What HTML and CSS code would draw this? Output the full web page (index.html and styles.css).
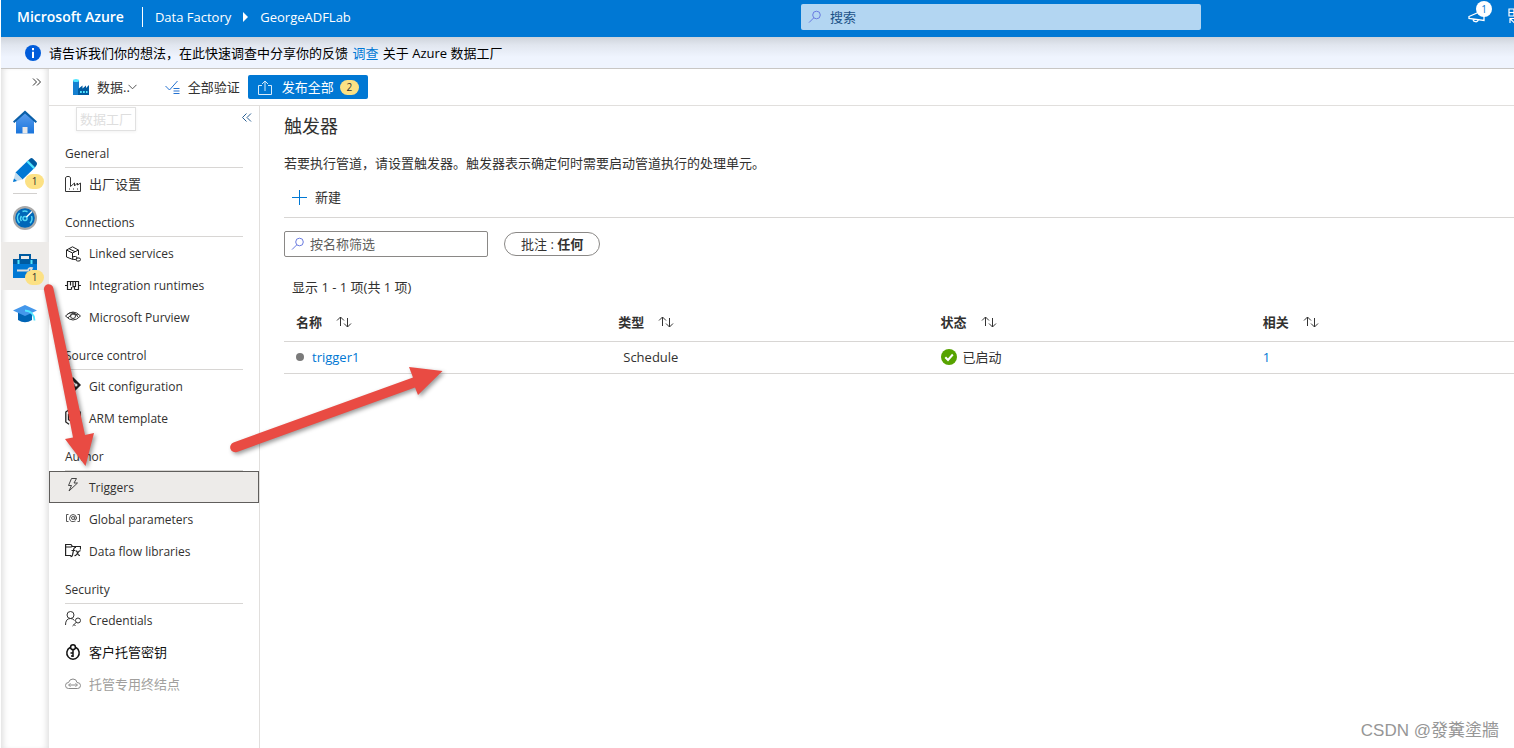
FILE: index.html
```html
<!DOCTYPE html>
<html lang="zh-CN">
<head>
<meta charset="utf-8">
<title>GeorgeADFLab - Azure Data Factory</title>
<link rel="stylesheet" href="styles.css">
</head>
<body>
<header class="topbar">
  <nav class="brand">
    <a class="brand-name" href="#">Microsoft Azure</a>
    <a class="crumb" href="#">Data Factory</a>
    <svg class="crumb-arrow" width="5" height="10" viewBox="0 0 5 10"><path d="M0 0l5 5-5 5z" fill="#fff"/></svg>
    <a class="crumb" href="#">GeorgeADFLab</a>
  </nav>
  <label class="search global-search">
    <svg width="14" height="14" viewBox="0 0 14 14" fill="none" stroke="#6a7be0"><circle cx="8.500" cy="5" r="3.800"/><path d="M5.800 7.800L1 12.600"/></svg>
    <input type="text" placeholder="搜索" aria-label="搜索">
  </label>
  <div class="top-actions">
    <button class="icon-btn" aria-label="通知">
      <svg width="18" height="14" viewBox="0 0 18 14" fill="none" stroke="#fff" stroke-width="1.300"><path d="M1 7.500L16 1v10.500L1 9.500zM5 10c.2 3.500 5 3.500 5.200.8"/></svg>
      <span class="count">1</span>
    </button>
    <button class="icon-btn last-action" aria-label="切换">
      <svg width="18" height="16" viewBox="0 0 18 16" fill="none" stroke="#fff" stroke-width="1.200"><path d="M1 1h15v7H1zM1 4.500h15M6 1v7M2 15v-4.500h4M2 10.500l5 5"/></svg>
    </button>
  </div>
</header>

<div class="notice">
  <svg width="16" height="16" viewBox="0 0 16 16"><circle cx="8" cy="8" r="8" fill="#015cda"/><path d="M8 3v2.300M8 6.800V13" stroke="#fff" stroke-width="2"/></svg>
  <p>请告诉我们你的想法，在此快速调查中分享你的反馈 <a href="#">调查</a> 关于 Azure 数据工厂</p>
</div>

<div class="shell">
  <nav class="rail" aria-label="主导航">
    <button class="rail-toggle" aria-label="展开"><svg width="10" height="8" viewBox="0 0 10 8" fill="none" stroke="#333"><path d="M1 .5L4.500 4 1 7.500M5 .5L8.500 4 5 7.500"/></svg></button>
    <a class="rail-item" href="#" aria-label="主页">
      <svg width="24" height="24" viewBox="0 0 24 24"><defs><linearGradient id="g1" x2="0" y2="1"><stop stop-color="#5ea0ef"/><stop offset="1" stop-color="#1a75dc"/></linearGradient></defs><path d="M3 10l9-8 9 8v13.500H3z" fill="url(#g1)"/><path d="M0 11.500L12 .5l12 11-1.300 1.500L12 3.500 1.300 13z" fill="#0a5fa8"/><path d="M9.500 17h5v6.500h-5z" fill="#e8e8e8"/></svg>
    </a>
    <a class="rail-item rail-divided" href="#" aria-label="创作">
      <svg width="24" height="24" viewBox="0 0 24 24"><path d="M2.500 14.500L15 2.500l7 7L9.500 21.500z" fill="#0078d4"/><path d="M15 2.500L17 .7q1.500-1.200 3 0l3.500 3.500q1 1.500 0 3L22 9.500z" fill="#005ba1"/><path d="M13.500 4l1.500-1.500L22 9.500 20.500 11z" fill="#50e6ff"/><path d="M2.500 14.500l7 7L0 24z" fill="#c3dcee"/><path d="M1 20.500l3 2.500-4 1z" fill="#0078d4"/></svg>
      <span class="badge rail-badge">1</span>
    </a>
    <a class="rail-item" href="#" aria-label="监视">
      <svg width="24" height="24" viewBox="0 0 24 24"><circle cx="12" cy="12" r="12" fill="#a9a9a9"/><circle cx="12" cy="12" r="9.800" fill="#0067b8"/><g fill="none" stroke="#50d5f5" stroke-width="1.500"><path d="M6.500 17a7 7 0 0 1 0-10M9.500 5.500A7 7 0 0 1 14.500 5.700M18.500 10a7 7 0 0 1-1.500 7.300M8.500 15a4 4 0 0 1 0-5"/><circle cx="12" cy="12.500" r="2"/><path d="M13.500 11L19 5.500" stroke="#fff"/></g></svg>
    </a>
    <a class="rail-item rail-active" href="#" aria-label="管理">
      <svg width="24" height="24" viewBox="0 0 24 24"><path d="M7 5V1h10v4" fill="none" stroke="#005ba1" stroke-width="2"/><path d="M0 5h24v19H0z" fill="#0078d4"/><path d="M0 5h24v5H0z" fill="#005ba1"/><path d="M5.500 6v4M18.500 6v4" stroke="#50e6ff" stroke-width="2"/><path d="M4 16.500h11a3 3 0 0 1 4-2.500l-1 2 1 2 2-1" fill="none" stroke="#ddd" stroke-width="1.800"/></svg>
      <span class="badge rail-badge">1</span>
    </a>
    <a class="rail-item" href="#" aria-label="学习">
      <svg width="24" height="20" viewBox="0 0 24 20"><path d="M5 8h14v8q-7 4.500-14 0z" fill="#0064b5"/><path d="M0 6.500L12 1l12 5.500L12 12z" fill="#4497eb"/><path d="M12 6.500Q21 7 21.500 16.500" fill="none" stroke="#50e6ff" stroke-width="1.800"/></svg>
    </a>
  </nav>

  <div class="workspace">
    <div class="toolbar">
      <button class="tool tool-menu">
        <svg width="16" height="16" viewBox="0 0 16 16"><path d="M0 1.500h6V16H0z" fill="#1580d0"/><ellipse cx="3" cy="1.500" rx="3" ry="1.500" fill="#50e6ff"/><path d="M5 10l4.500-3.500v3L13 6.500V9l3-3v10H5z" fill="#005ba1"/><path d="M7 12h1.800v2H7zM10 12h1.800v2H10zM13 12h1.500v2H13z" fill="#50e6ff"/></svg>
        <span>数据..</span>
        <svg class="tool-caret" width="9" height="6" viewBox="0 0 9 6" fill="none" stroke="#555"><path d="M.5.800l4 4 4-4"/></svg>
      </button>
      <div class="tooltip">数据工厂</div>
      <button class="tool tool-validate">
        <svg width="15" height="14" viewBox="0 0 15 14" fill="none" stroke="#2673d1"><path d="M.5 6l4 4 8-9M8.500 8.500h6M8.500 11h6M8.500 13.500h6"/></svg>
        <span>全部验证</span>
      </button>
      <button class="publish">
        <svg width="14" height="15" viewBox="0 0 14 15" fill="none" stroke="#d8ebfa"><path d="M4 5.500H.5v9h13v-9H10M7 11V1M4 4l3-3 3 3"/></svg>
        <span>发布全部</span>
        <span class="badge">2</span>
      </button>
    </div>

    <div class="panes">
      <aside class="side">
        <div class="side-top"><button class="icon-btn" aria-label="折叠"><svg width="10" height="9" viewBox="0 0 10 9" fill="none" stroke="#2a5f92"><path d="M4.500.5l-4 4 4 4M9 .5l-4 4 4 4"/></svg></button></div>
        <h2>General</h2>
        <a class="side-link side-cjk" href="#"><svg width="16" height="16" viewBox="0 0 16 16" fill="none" stroke="#333"><path d="M.5 15.500V1.500L2 .5h2l1.500 1v9l4-3.500v3l3-3v2L15.500 7v8.500zM4 13h1M8 13h1M12 13h1"/></svg>出厂设置</a>
        <h2>Connections</h2>
        <a class="side-link" href="#"><svg width="16" height="16" viewBox="0 0 16 16" fill="none" stroke="#222"><path d="M8 13.500L1.500 11V4L7.500.8l6 3.200v5M1.500 4l6 3 6-3M7.500 7v4.500M4 2.700l6 3"/><rect x="7.500" y="10.500" width="4.500" height="3" rx="1.500"/><rect x="11" y="12" width="4.500" height="3" rx="1.500"/></svg>Linked services</a>
        <a class="side-link" href="#"><svg width="16" height="16" viewBox="0 0 16 16" fill="none" stroke="#222" stroke-width="1.200"><path d="M0 7.500h2.500M13.500 7.500H16M6.500 11.500h-4v-8h3v4M5.500 3.500h2.500v6M6.500 9v2.500M8 3.500h2.500v5H8M9.500 11.500h4v-8h-3M9.500 8.500v3"/></svg>Integration runtimes</a>
        <a class="side-link" href="#"><svg class="icon-up" width="16" height="16" viewBox="0 0 16 16" fill="none" stroke="#333"><path d="M.5 8Q8 0 15.500 8 8 16 .5 8zM2.500 6Q9 2 13 9M3 10q4-6 10-3"/><circle cx="8" cy="8" r="2.500"/></svg>Microsoft Purview</a>
        <h2>Source control</h2>
        <a class="side-link" href="#"><svg class="icon-up" width="16" height="16" viewBox="0 0 16 16"><path d="M8 0l8 8-8 8-8-8z" fill="#222"/><path d="M6 3l5 5M8 5v7" stroke="#fff" stroke-width="1.200"/><circle cx="11" cy="8" r="1.500" fill="#fff"/><circle cx="8" cy="12" r="1.300" fill="#fff"/></svg>Git configuration</a>
        <a class="side-link" href="#"><svg class="icon-up" width="16" height="16" viewBox="0 0 16 16" fill="none" stroke="#222" stroke-width="1.300"><path d="M4 .8L.8 3v10L4 15.200M12 .8L15.200 3v10L12 15.200"/><path d="M8 3l4.500 2.500v5L8 13l-4.500-2.500v-5zM3.500 5.500L8 8l4.500-2.500M8 8v5"/></svg>ARM template</a>
        <h2>Author</h2>
        <a class="side-link side-active" href="#" aria-current="page"><svg class="icon-up" width="16" height="16" viewBox="0 0 16 16" fill="none" stroke="#444"><path d="M6.500 1.500h5L9 6h3.500L4 14l2.500-5.500h-3z"/></svg>Triggers</a>
        <a class="side-link" href="#"><svg class="icon-up" width="16" height="16" viewBox="0 0 16 16" fill="none" stroke="#555"><path d="M3.500 4.500h-2v7h2M12.500 4.500h2v7h-2M10.500 11Q5 13 4.500 8.500 5 4.500 8 4.500t3.700 3.500q-.5 2.500-2 1.500l.3-3.500"/><circle cx="8" cy="8" r="1.500"/></svg>Global parameters</a>
        <a class="side-link" href="#"><svg class="icon-up" width="16" height="16" viewBox="0 0 16 16" fill="none" stroke="#222" stroke-width="1.200"><path d="M6 13.500H.6v-11h5.400l1.500 2h8v3M.6 5h5.500l1.500-.8"/><path d="M11 5.500q-2-.3-2.300 2L7.500 13q-.5 1.800-2 1.500M6.500 8.500H10M10.500 9q1.500-.5 2 2t2.500 2.500M15.500 8.700q-1.500 0-3 2.500t-3 2.500"/></svg>Data flow libraries</a>
        <h2>Security</h2>
        <a class="side-link" href="#"><svg class="icon-up" width="16" height="16" viewBox="0 0 16 16" fill="none" stroke="#333"><circle cx="5.500" cy="4" r="3.500"/><path d="M.5 14q0-6.500 5-6.500 2.500 0 4 2"/><circle cx="13" cy="9.500" r="2.500"/><path d="M11.300 11.300L7.500 15M9 13.500l1.500 1.500"/></svg>Credentials</a>
        <a class="side-link side-cjk side-dark" href="#"><svg width="16" height="16" viewBox="0 0 16 16" fill="none" stroke="#111" stroke-width="1.500"><path d="M5 3.500a6.200 6.200 0 1 0 6 0"/><circle cx="8" cy="3.200" r="2.400"/><path d="M8 5.800V13M8 9H5.500M8 12H6"/></svg>客户托管密钥</a>
        <a class="side-link side-cjk side-disabled" aria-disabled="true"><svg width="16" height="16" viewBox="0 0 16 16" fill="none" stroke="#888"><path d="M3.500 12.500Q.5 12.500.5 9.500t3-3Q4.500 3 8 3t4 3.500q3.500 0 3.500 3t-3 3z"/><path d="M5.500 7.500l-2 1.500 2 1.500M10.500 7.500l2 1.500-2 1.500M5 9h6"/></svg>托管专用终结点</a>
      </aside>

      <main class="content">
        <h1>触发器</h1>
        <p class="lead">若要执行管道，请设置触发器。触发器表示确定何时需要启动管道执行的处理单元。</p>
        <div class="commands">
          <button class="tool"><svg width="15" height="15" viewBox="0 0 15 15" stroke="#0078d4"><path d="M7.500 0v15M0 7.500h15"/></svg><span>新建</span></button>
        </div>
        <div class="filters">
          <label class="search name-filter">
            <svg width="14" height="14" viewBox="0 0 14 14" fill="none" stroke="#6a7be0"><circle cx="8.500" cy="5" r="3.800"/><path d="M5.800 7.800L1 12.600"/></svg>
            <input type="text" placeholder="按名称筛选" aria-label="按名称筛选">
          </label>
          <button class="pill">批注 : <b>任何</b></button>
        </div>
        <p class="summary">显示 1 - 1 项(共 1 项)</p>
        <table class="grid">
          <thead>
            <tr>
              <th><button class="sort">名称<svg width="16" height="12" viewBox="0 0 16 12" fill="none" stroke="#333"><path d="M4.500 10V1M1 4.500L4.500 1 8 4.500M11.500 2v9M8 7.500l3.500 3.500L15 7.500"/></svg></button></th>
              <th><button class="sort">类型<svg width="16" height="12" viewBox="0 0 16 12" fill="none" stroke="#333"><path d="M4.500 10V1M1 4.500L4.500 1 8 4.500M11.500 2v9M8 7.500l3.500 3.500L15 7.500"/></svg></button></th>
              <th><button class="sort">状态<svg width="16" height="12" viewBox="0 0 16 12" fill="none" stroke="#333"><path d="M4.500 10V1M1 4.500L4.500 1 8 4.500M11.500 2v9M8 7.500l3.500 3.500L15 7.500"/></svg></button></th>
              <th class="col-rest"><button class="sort">相关<svg width="16" height="12" viewBox="0 0 16 12" fill="none" stroke="#333"><path d="M4.500 10V1M1 4.500L4.500 1 8 4.500M11.500 2v9M8 7.500l3.500 3.500L15 7.500"/></svg></button></th>
            </tr>
          </thead>
          <tbody>
            <tr>
              <td><div class="cell"><span class="dot"></span><a href="#">trigger1</a></div></td>
              <td><div class="cell cell-type">Schedule</div></td>
              <td><div class="cell cell-status"><svg width="16" height="16" viewBox="0 0 16 16"><circle cx="8" cy="8" r="8" fill="#57a300"/><path d="M4.300 8.200l2.700 2.800 4.800-5.500" fill="none" stroke="#fff" stroke-width="2"/></svg>已启动</div></td>
              <td><div class="cell"><a href="#">1</a></div></td>
            </tr>
          </tbody>
        </table>
      </main>
    </div>
  </div>
</div>

<svg class="annotations" width="460" height="480" viewBox="0 0 460 480" aria-hidden="true">
  <g fill="#e94b43">
    <path d="M44 290a4.700 4.700 0 0 1 9.300-2L85 435l9-2-8.500 33L65 439l8-1.500z"/>
    <path d="M233.500 442.500L413 377.500 409 367l33.500 4L418 395l-3-7.500-178 64.500a5 5 0 0 1-3.500-9.500z"/>
  </g>
</svg>
<div class="watermark">CSDN @發糞塗牆</div>
</body>
</html>
```
FILE: styles.css
```css
* {
  box-sizing: border-box;
}

body {
  display: flex;
  flex-direction: column;
  min-height: 100vh;
  margin: 0;
  padding-left: 1px;
  position: relative;
  overflow-x: hidden;
  background: #fff;
  color: #323130;
  font: 13px/20px "Open Sans", "Noto Sans CJK SC", sans-serif;
}

h1, h2, p {
  margin: 0;
}

a {
  color: #0078d4;
  text-decoration: none;
}

button, input {
  font: inherit;
  color: inherit;
}

button {
  padding: 0;
  border: 0;
  background: none;
  cursor: pointer;
}

svg {
  flex: none;
  display: block;
}

.topbar {
  display: grid;
  grid-template-columns: 800fr 400px 313fr;
  height: 37px;
  overflow: hidden;
  background: #0078d4;
  color: #fff;
}

.brand {
  display: flex;
  align-items: center;
  height: 34px;
  padding-left: 16px;
}

.brand-name {
  margin-right: 12px;
  padding-right: 18px;
  border-right: 1px solid #fff;
  color: #fff;
  font-size: 14px;
  font-weight: 600;
}

.crumb {
  color: #fff;
}

.crumb-arrow {
  margin: 0 12px;
}

.search {
  display: flex;
  align-items: center;
  gap: 8px;
  height: 26px;
  padding: 0 7px;
  border-radius: 2px;
}

.search input {
  flex: 1;
  min-width: 0;
  padding: 0;
  border: 0;
  outline: 0;
  background: none;
}

.search input::placeholder {
  color: #605e5c;
  opacity: 1;
}

.global-search {
  margin-top: 4px;
  background: #b3d6f2;
}

.global-search input::placeholder {
  color: #1b5288;
}

.top-actions {
  display: flex;
  justify-content: flex-end;
  gap: 22px;
  margin-right: -12px;
}

.icon-btn {
  display: flex;
  position: relative;
  align-items: center;
}

.top-actions .icon-btn {
  height: 32px;
}

.count {
  position: absolute;
  top: 1px;
  left: 8px;
  width: 16px;
  border-radius: 8px;
  background: #fff;
  color: #0078d4;
  font-size: 10px;
  line-height: 16px;
  text-align: center;
}

.notice {
  display: flex;
  align-items: center;
  gap: 8px;
  height: 32px;
  padding-left: 24px;
  border-bottom: 1px solid #c8c6c4;
  background: linear-gradient(#ced3db, #e1e6ef 8px, #eff4fe 20px);
  color: #000;
}

.notice a {
  margin: 0 1px;
}

.shell {
  display: flex;
  flex: 1;
}

.rail {
  display: flex;
  flex-direction: column;
  flex: none;
  width: 48px;
  box-shadow: inset 6px 0 6px -4px #ddd, inset -6px 0 6px -4px #ddd;
}

.rail-toggle {
  display: flex;
  align-items: center;
  justify-content: flex-end;
  height: 29px;
  padding: 0 7px 3px 0;
}

.rail-item {
  display: flex;
  position: relative;
  align-items: center;
  justify-content: center;
  height: 48px;
}

.rail-divided::after {
  content: "";
  position: absolute;
  right: 12px;
  bottom: 0;
  left: 12px;
  border-bottom: 1px solid #d2d0ce;
}

.rail-active {
  background: #edebe9;
}

.badge {
  width: 19px;
  border-radius: 8px;
  background: #fce184;
  color: #323130;
  font-size: 10px;
  line-height: 15px;
  text-align: center;
}

.rail-badge {
  position: absolute;
  right: 5px;
  bottom: 5px;
}

.workspace {
  display: flex;
  flex: 1;
  flex-direction: column;
  min-width: 0;
}

.toolbar {
  display: flex;
  position: relative;
  align-items: center;
  height: 37px;
  padding-left: 24px;
  border-bottom: 1px solid #e1dfdd;
}

.tool {
  display: flex;
  align-items: center;
  gap: 8px;
}

.tool-menu {
  margin-right: 28px;
}

.tool-caret {
  margin-left: -10px;
}

.publish {
  display: flex;
  align-items: center;
  height: 24px;
  margin-left: 8px;
  padding: 0 9px 0 10px;
  border-radius: 2px;
  background: #0078d4;
  color: #fff;
}

.publish svg {
  margin-right: 10px;
}

.publish .badge {
  margin-left: 6px;
}

.tooltip {
  position: absolute;
  top: 38px;
  left: 27px;
  padding: 1px 3px;
  border: 1px solid #e1e1e1;
  background: #fff;
  color: #dedede;
  box-shadow: 0 1px 3px #f2f2f2;
}

.panes {
  display: flex;
  flex: 1;
}

.side {
  flex: none;
  width: 211px;
  border-right: 1px solid #e1dfdd;
}

.side-top {
  display: flex;
  justify-content: flex-end;
  height: 25px;
  padding: 0 7px 2px 0;
}

.side h2 {
  margin: 0 16px;
  padding: 13px 0 3px;
  border-bottom: 1px solid #d8d6d4;
  font-size: 12px;
  font-weight: 500;
  line-height: 20px;
}

.side-link {
  display: flex;
  align-items: center;
  gap: 8px;
  height: 32px;
  padding: 2px 16px 0;
  color: #323130;
  font-size: 12px;
}

.side-link .icon-up {
  margin-bottom: 5px;
}

.side-active {
  padding: 1px 15px 0;
  border: 1px solid #605e5c;
  background: #edebe9;
}

.side-cjk {
  padding-top: 0;
  font-size: 13px;
}

.side-dark {
  color: #111;
}

.side-disabled {
  color: #a19f9d;
}

.content {
  flex: 1;
  min-width: 0;
  padding: 7px 0 0 24px;
}

h1 {
  font-size: 18px;
  font-weight: 400;
  line-height: 26px;
}

.lead {
  margin-top: 14px;
}

.commands {
  display: flex;
  align-items: center;
  height: 45px;
  padding: 4px 8px 0;
  border-bottom: 1px solid #d8d6d4;
}

.filters {
  display: flex;
  align-items: center;
  gap: 16px;
  margin-top: 13px;
}

.name-filter {
  width: 204px;
  padding: 0 6px;
  border: 1px solid #8a8886;
  background: #fff;
}

.name-filter svg {
  margin-right: -3px;
}

.pill {
  height: 24px;
  padding: 0 16px;
  border: 1px solid #8a8886;
  border-radius: 12px;
  line-height: 22px;
}

.summary {
  margin: 20px 0 0 8px;
}

.grid {
  width: 100%;
  margin-top: 7px;
  border-collapse: collapse;
  table-layout: fixed;
}

.grid th {
  width: 26.2%;
  height: 37px;
  padding: 0 12px;
  border-bottom: 1px solid #d8d6d4;
  text-align: left;
}

.grid .col-rest {
  width: auto;
}

.grid td {
  height: 32px;
  padding: 0 12px;
  border-bottom: 1px solid #d8d6d4;
}

.sort {
  display: flex;
  align-items: center;
  gap: 14px;
  font-weight: 600;
}

.cell {
  display: flex;
  align-items: center;
}

.cell-type {
  padding-left: 5px;
}

.cell-status {
  gap: 6px;
}

.dot {
  width: 8px;
  height: 8px;
  margin-right: 8px;
  border-radius: 50%;
  background: #7a7a7a;
}

.annotations {
  position: absolute;
  top: 0;
  left: 0;
  filter: drop-shadow(2px 2px 2px rgba(0, 0, 0, 0.4));
  pointer-events: none;
}

.watermark {
  position: absolute;
  right: 15px;
  bottom: 7px;
  color: #969696;
  font: 17px/20px "Liberation Sans", "Noto Sans CJK TC", sans-serif;
}
```
